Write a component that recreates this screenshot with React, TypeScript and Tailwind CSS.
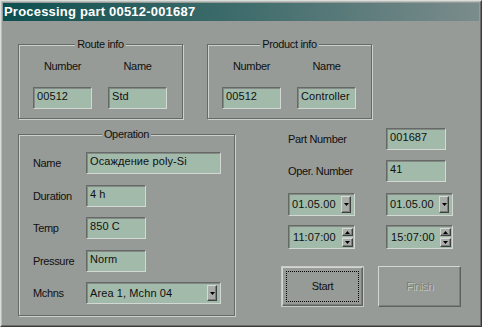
import React from 'react';

const BG = 'bg-[#979b97]';

const Field = ({ value, className = '' }: { value: string; className?: string }) => (
  <div
    className={`h-[22px] bg-[#a2baaa] border border-t-[#666a66] border-l-[#666a66] border-r-[#d4d8d4] border-b-[#d4d8d4] shadow-[inset_1px_1px_0_#858985] pl-[3px] pt-[2px] text-[#101010] tracking-[0.1px] whitespace-nowrap overflow-hidden ${className}`}
  >
    {value}
  </div>
);

const Arrow = ({ up = false }: { up?: boolean }) => (
  <svg width="5" height="3" viewBox="0 0 5 3">
    <path d={up ? 'M2.5 0L5 3H0Z' : 'M0 0H5L2.5 3Z'} fill="#000" />
  </svg>
);

const SmallBtn = ({ children, className = '' }: { children: React.ReactNode; className?: string }) => (
  <div
    className={`flex items-center justify-center bg-[#a9ada9] border border-t-[#d6dad6] border-l-[#d6dad6] border-r-[#3e403e] border-b-[#3e403e] shadow-[inset_-1px_-1px_0_#7a7e7a] ${className}`}
  >
    {children}
  </div>
);

const Combo = ({ value, className = '' }: { value: string; className?: string }) => (
  <div
    className={`flex bg-[#a2baaa] border border-t-[#666a66] border-l-[#666a66] border-r-[#d4d8d4] border-b-[#d4d8d4] shadow-[inset_1px_1px_0_#858985] pt-[2px] pb-[2px] pr-[3px] ${className}`}
  >
    <div className="flex-1 flex items-center pl-[3px] text-[#101010] tracking-[0.1px] whitespace-nowrap">{value}</div>
    <SmallBtn className="w-[10px]">
      <Arrow />
    </SmallBtn>
  </div>
);

const Spinner = ({ value }: { value: string }) => (
  <div className="flex w-[67px] h-[24px] bg-[#a2baaa] border border-t-[#666a66] border-l-[#666a66] border-r-[#d4d8d4] border-b-[#d4d8d4] shadow-[inset_1px_1px_0_#858985] pt-[2px] pb-[1px] pr-[1px]">
    <div className="flex-1 flex items-center pl-[4px] text-[#101010] tracking-[0.1px] whitespace-nowrap">{value}</div>
    <div className="flex flex-col justify-between w-[11px]">
      <SmallBtn className="h-[8px]">
        <Arrow up />
      </SmallBtn>
      <div className="h-px bg-[#c8ccc8]" />
      <SmallBtn className="h-[9px]">
        <Arrow />
      </SmallBtn>
    </div>
  </div>
);

const Group = ({ title, className = '', children }: { title: string; className?: string; children: React.ReactNode }) => (
  <div className={`relative border border-[#666a66] shadow-[inset_1px_1px_0_#cdd1cd,1px_1px_0_#cdd1cd] ${className}`}>
    <div className="absolute -top-[7px] left-0 right-0 flex justify-center">
      <span className={`${BG} px-[2px] leading-[13px] text-[#101010]`}>{title}</span>
    </div>
    {children}
  </div>
);

const InfoGroup = ({ title, number, name }: { title: string; number: string; name: string }) => (
  <Group title={title} className="w-[165px] h-[75px] px-[14px] pt-[15px]">
    <div className="grid grid-cols-[59px_59px] gap-x-[16px] text-center text-[#101010]">
      <div>Number</div>
      <div>Name</div>
    </div>
    <div className="grid grid-cols-[59px_59px] gap-x-[16px] mt-[14px]">
      <Field value={number} />
      <Field value={name} />
    </div>
  </Group>
);

const OpRow = ({ label, children, className = '' }: { label: string; children: React.ReactNode; className?: string }) => (
  <div className={`flex items-center ${className}`}>
    <div className="w-[53px] text-[#101010] whitespace-nowrap pt-[1px]">{label}</div>
    {children}
  </div>
);

export default function App() {
  return (
    <div
      className={`w-[482px] h-[327px] ${BG} border border-t-[#dadeda] border-l-[#dadeda] border-r-[#3a3c3a] border-b-[#3a3c3a] font-['Liberation_Sans',Arial,sans-serif] text-[11px] leading-[13px] tracking-[-0.35px]`}
    >
      <div className="h-full border border-t-[#b9bdb9] border-l-[#b9bdb9] border-r-[#6c706c] border-b-[#6c706c] p-px">
        <div className="h-[18px] bg-linear-to-r from-[#0a5050] via-[#3f6c6c] to-[#7b8c8c] pl-[1px] text-white font-bold text-[13px] leading-[18px] tracking-[0.2px] whitespace-nowrap">
          Processing part 00512-001687
        </div>

        <div className="flex gap-[24px] mt-[23px] pl-[15px]">
          <InfoGroup title="Route info" number="00512" name="Std" />
          <InfoGroup title="Product info" number="00512" name="Controller" />
        </div>

        <div className="flex items-start mt-[9px] pl-[15px]">
          <Group title="Operation" className="mt-[6px] w-[217px] h-[182px] pl-[14px] pt-[17px]">
            <div className="flex flex-col">
              <OpRow label="Name">
                <Field value="Осаждение poly-Si" className="w-[135px]" />
              </OpRow>
              <OpRow label="Duration" className="mt-[11px]">
                <Field value="4 h" className="w-[60px]" />
              </OpRow>
              <OpRow label="Temp" className="mt-[10px]">
                <Field value="850 C" className="w-[60px]" />
              </OpRow>
              <OpRow label="Pressure" className="mt-[11px]">
                <Field value="Norm" className="w-[60px]" />
              </OpRow>
              <OpRow label="Mchns" className="mt-[10px]">
                <Combo value="Area 1, Mchn 04" className="w-[135px] h-[22px]" />
              </OpRow>
            </div>
          </Group>

          <div className="ml-[46px] flex flex-col">
            <div className="flex items-center">
              <div className="w-[105px] pl-[7px] text-[#101010]">Part Number</div>
              <Field value="001687" className="w-[60px]" />
            </div>
            <div className="flex items-center mt-[10px]">
              <div className="w-[105px] pl-[7px] text-[#101010]">Oper. Number</div>
              <Field value="41" className="w-[60px]" />
            </div>
            <div className="flex gap-[31px] mt-[11px] pl-[7px]">
              <Combo value="01.05.00" className="w-[67px] h-[23px]" />
              <Combo value="01.05.00" className="w-[67px] h-[23px]" />
            </div>
            <div className="flex gap-[31px] mt-[9px] pl-[7px]">
              <Spinner value="11:07:00" />
              <Spinner value="15:07:00" />
            </div>
            <div className="flex gap-[14px] mt-[17px]">
              <button className="w-[83px] h-[41px] border border-[#c8ccc8] p-0 bg-transparent">
                <div className="h-full border border-t-[#d2d6d2] border-l-[#d2d6d2] border-r-[#5e625e] border-b-[#5e625e] shadow-[inset_-1px_-1px_0_#7c807c] p-[3px]">
                  <div className="h-full border border-dotted border-black flex items-center justify-center text-[#101010] text-[11px]">
                    Start
                  </div>
                </div>
              </button>
              <button className="w-[83px] h-[41px] border border-t-[#d2d6d2] border-l-[#d2d6d2] border-r-[#5e625e] border-b-[#5e625e] shadow-[inset_-1px_-1px_0_#7c807c] bg-transparent flex items-center justify-center text-[11px] text-[#7c807c] [text-shadow:1px_1px_0_#c4c8c4]">
                Finish
              </button>
            </div>
          </div>
        </div>
      </div>
    </div>
  );
}
